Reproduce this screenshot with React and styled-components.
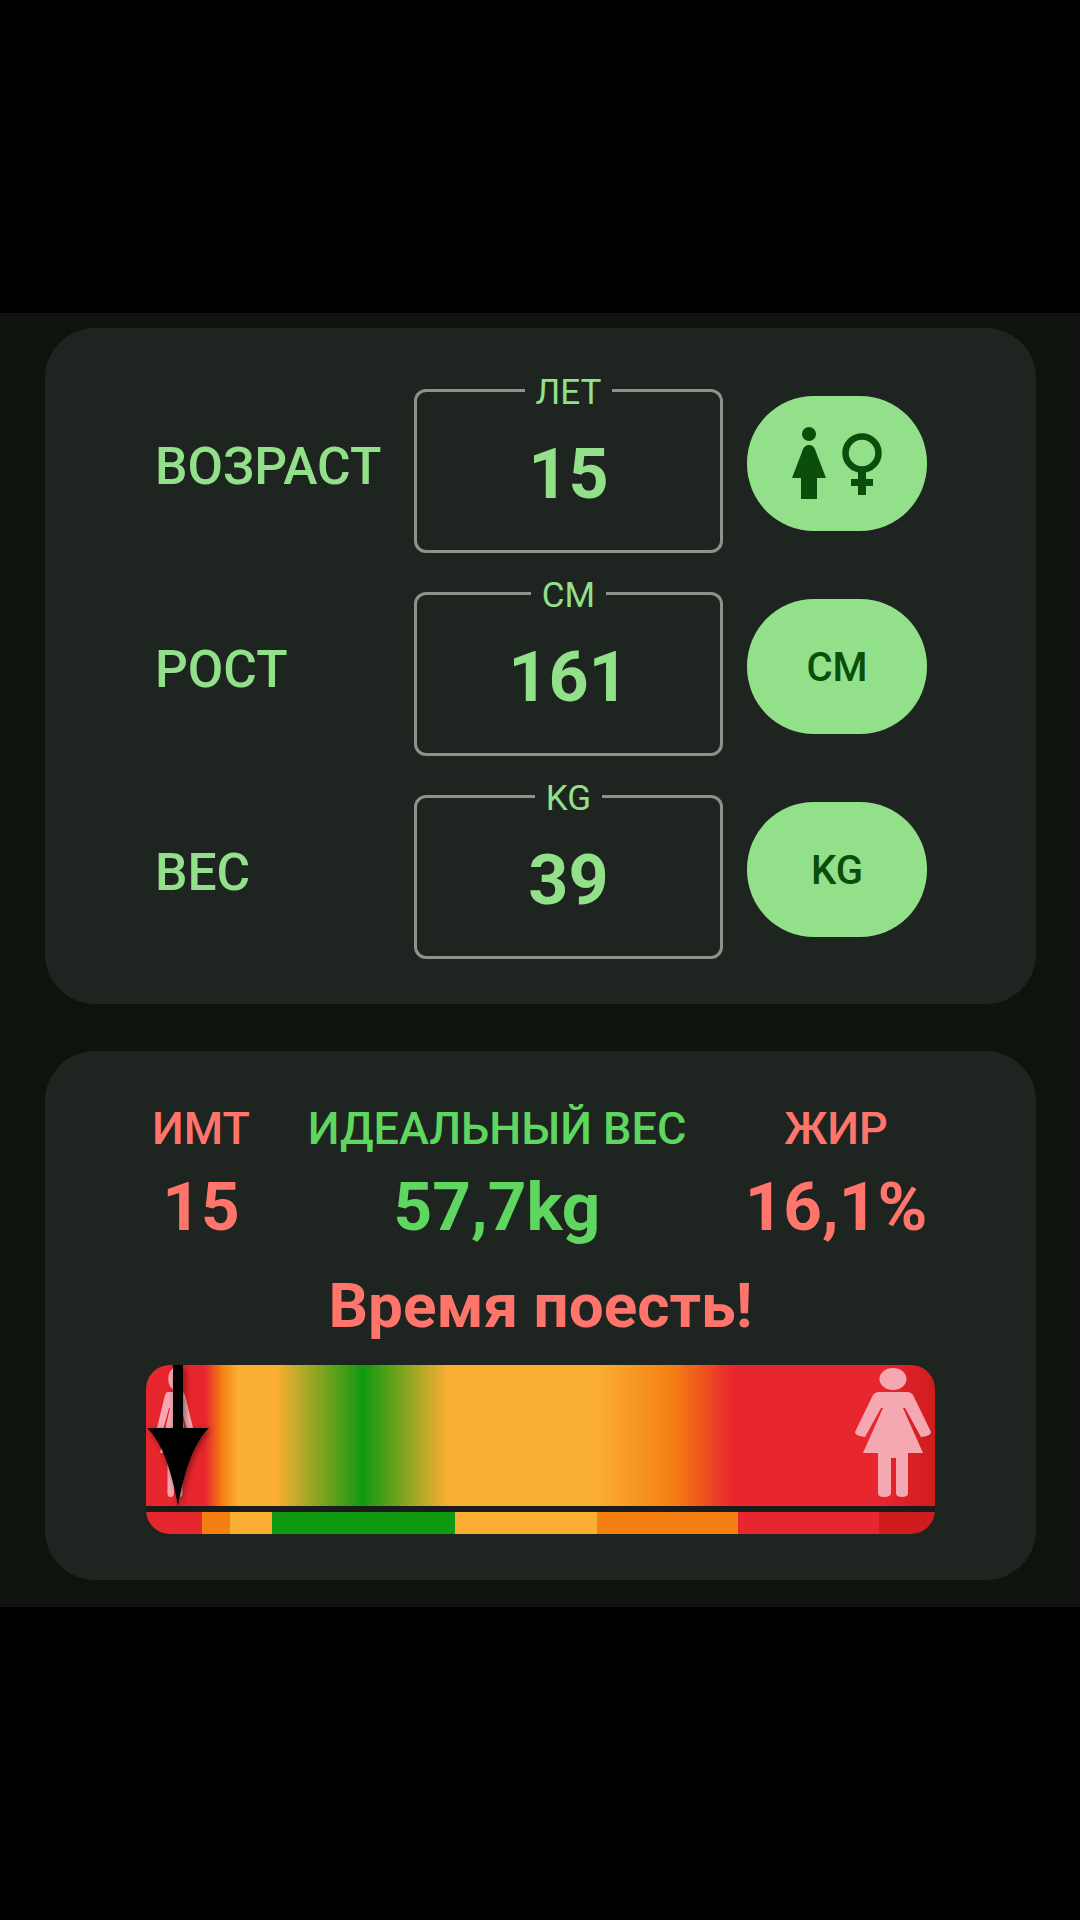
import React from "react";
import styled, { createGlobalStyle } from "styled-components";

const GlobalStyle = createGlobalStyle`
  html, body {
    margin: 0;
    padding: 0;
    background: #000;
    font-family: Roboto, "Noto Sans", sans-serif;
  }
`;

const Screen = styled.div`
  width: 1080px;
  height: 1920px;
  padding-top: 313px;
  box-sizing: border-box;
  background: #000;
`;

const Panel = styled.main`
  height: 1294px;
  box-sizing: border-box;
  padding: 15px 44px 0 45px;
  background: #0e130e;
  display: flex;
  flex-direction: column;
  gap: 47px;
`;

const Card = styled.section`
  background: #1e241f;
  border-radius: 50px;
  box-sizing: border-box;
`;

const InputCard = styled(Card)`
  height: 676px;
  padding: 45px 0 0 110px;
  display: flex;
  flex-direction: column;
  gap: 23px;
`;

const InputRow = styled.div`
  display: grid;
  grid-template-columns: 259px 309px 180px;
  align-items: center;
  height: 180px;
`;

const RowLabel = styled.div`
  font-size: 51.5px;
  font-weight: 500;
  color: #92e08a;
  margin-top: 6px;
  white-space: nowrap;
`;

const Field = styled.fieldset`
  margin: 0;
  padding: 0;
  height: 180px;
  box-sizing: border-box;
  border: 3px solid #8d928d;
  border-radius: 12px;
  text-align: center;
`;

const FieldLegend = styled.legend`
  margin: 0 auto;
  padding: 0 11px;
  height: 34px;
  font-size: 35px;
  line-height: 40px;
  color: #92e08a;
`;

const FieldValue = styled.div`
  font-size: 70px;
  font-weight: 700;
  line-height: 70px;
  margin-top: 32px;
  color: #92e08a;
`;

const Pill = styled.div`
  width: 180px;
  height: 135px;
  margin: 0 0 0 24px;
  padding-top: ${(p) => (p.$text ? "3px" : "0")};
  box-sizing: border-box;
  border-radius: 67px;
  background: #92e08a;
  color: #0b4d0b;
  font-size: 40px;
  font-weight: 500;
  display: flex;
  align-items: center;
  justify-content: center;
`;

const ResultCard = styled(Card)`
  height: 529px;
  padding: 50px 101px 0;
`;

const Stats = styled.div`
  display: grid;
  grid-template-columns: 110px 482px 196px;
  text-align: center;
`;

const Stat = styled.div`
  color: ${(p) => (p.$good ? "#5fd65f" : "#ff756c")};
`;

const StatTitle = styled.div`
  font-size: 45px;
  line-height: 56px;
  font-weight: 500;
  white-space: nowrap;
`;

const StatValue = styled.div`
  font-size: 67.5px;
  line-height: 80px;
  font-weight: 700;
  margin-top: 10px;
  white-space: nowrap;
`;

const Message = styled.div`
  font-size: 62px;
  line-height: 70px;
  font-weight: 700;
  text-align: center;
  color: #ff756c;
  margin-top: 24px;
`;

const Scale = styled.div`
  position: relative;
  margin-top: 24px;
  width: 789px;
  border-radius: 24px;
  overflow: hidden;
  background: #1b1b1b;
`;

const Gradient = styled.div`
  height: 141px;
  background: linear-gradient(
    to right,
    #e8262e 0,
    #e8262e 59px,
    #f57f12 76px,
    #faae33 92px,
    #faae33 131px,
    #0f9a0f 217px,
    #faae33 301px,
    #faae33 451px,
    #f57f12 527px,
    #e8262e 587px,
    #e8262e 733px,
    #cf1c1c 789px
  );
`;

const Segments = styled.div`
  display: flex;
  height: 22px;
  margin-top: 6px;
`;

const Segment = styled.div`
  width: ${(p) => p.$w}px;
  background: ${(p) => p.$color};
`;

const WomanIcon = styled.svg`
  position: absolute;
  top: 3px;
  left: ${(p) => p.$left}px;
  width: ${(p) => p.$w}px;
  height: 129px;
  fill: #f6a8b2;
`;

const Arrow = styled.svg`
  position: absolute;
  top: 0;
  left: 0;
  width: 64px;
  height: 141px;
  filter: drop-shadow(2px 2px 3px rgba(0, 0, 0, 0.45));
`;

const RED = "#e8262e";
const ORANGE = "#f57f12";
const AMBER = "#faae33";
const GREEN = "#0f9a0f";
const DARK_RED = "#cf1c1c";

const segments = [
  [56, RED],
  [28, ORANGE],
  [42, AMBER],
  [183, GREEN],
  [142, AMBER],
  [141, ORANGE],
  [141, RED],
  [56, DARK_RED],
];

function Woman({ left, w }) {
  return (
    <WomanIcon $left={left} $w={w} viewBox="0 0 76 129" preserveAspectRatio="none">
      <ellipse cx="38" cy="11" rx="13.5" ry="11" />
      <path d="M24 24H52Q57 24 59 29L76 64Q76 68 66 69L50 40H48L68 85H53V125Q53 129 47 129Q41 129 41 125V90H36V125Q36 129 29 129Q23 129 23 125V85H8L28 40H26L10 69Q0 68 0 64L17 29Q19 24 24 24Z" />
    </WomanIcon>
  );
}

function GenderIcon() {
  return (
    <svg width="100" height="80" viewBox="0 0 100 80" fill="#0b4d0b">
      <circle cx="22" cy="11" r="7" />
      <path d="M22 22C26 22 28 25 29 29L39 55H30V76H14V55H5L15 29C16 25 18 22 22 22Z" />
      <circle cx="75" cy="30" r="16.5" fill="none" stroke="#0b4d0b" strokeWidth="6.5" />
      <rect x="71" y="46" width="8" height="26" />
      <rect x="64" y="56" width="22" height="7" />
    </svg>
  );
}

const rows = [
  { label: "ВОЗРАСТ", unit: "ЛЕТ", value: "15", pill: <GenderIcon /> },
  { label: "РОСТ", unit: "СМ", value: "161", pill: "СМ", text: true },
  { label: "ВЕС", unit: "KG", value: "39", pill: "KG", text: true },
];

export default function App() {
  return (
    <Screen>
      <GlobalStyle />
      <Panel>
        <InputCard>
          {rows.map((row) => (
            <InputRow key={row.label}>
              <RowLabel>{row.label}</RowLabel>
              <Field>
                <FieldLegend>{row.unit}</FieldLegend>
                <FieldValue>{row.value}</FieldValue>
              </Field>
              <Pill $text={row.text}>{row.pill}</Pill>
            </InputRow>
          ))}
        </InputCard>
        <ResultCard>
          <Stats>
            <Stat>
              <StatTitle>ИМТ</StatTitle>
              <StatValue>15</StatValue>
            </Stat>
            <Stat $good>
              <StatTitle>ИДЕАЛЬНЫЙ ВЕС</StatTitle>
              <StatValue>57,7kg</StatValue>
            </Stat>
            <Stat>
              <StatTitle>ЖИР</StatTitle>
              <StatValue>16,1%</StatValue>
            </Stat>
          </Stats>
          <Message>Время поесть!</Message>
          <Scale>
            <Gradient />
            <Segments>
              {segments.map(([w, color], i) => (
                <Segment key={i} $w={w} $color={color} />
              ))}
            </Segments>
            <Woman left={10} w={38} />
            <Woman left={709} w={76} />
            <Arrow viewBox="0 0 64 141">
              <rect x="27" y="0" width="10" height="66" fill="#000" />
              <path d="M1 63H63C47 78 38 108 32 141C26 108 17 78 1 63Z" fill="#000" />
            </Arrow>
          </Scale>
        </ResultCard>
      </Panel>
    </Screen>
  );
}
